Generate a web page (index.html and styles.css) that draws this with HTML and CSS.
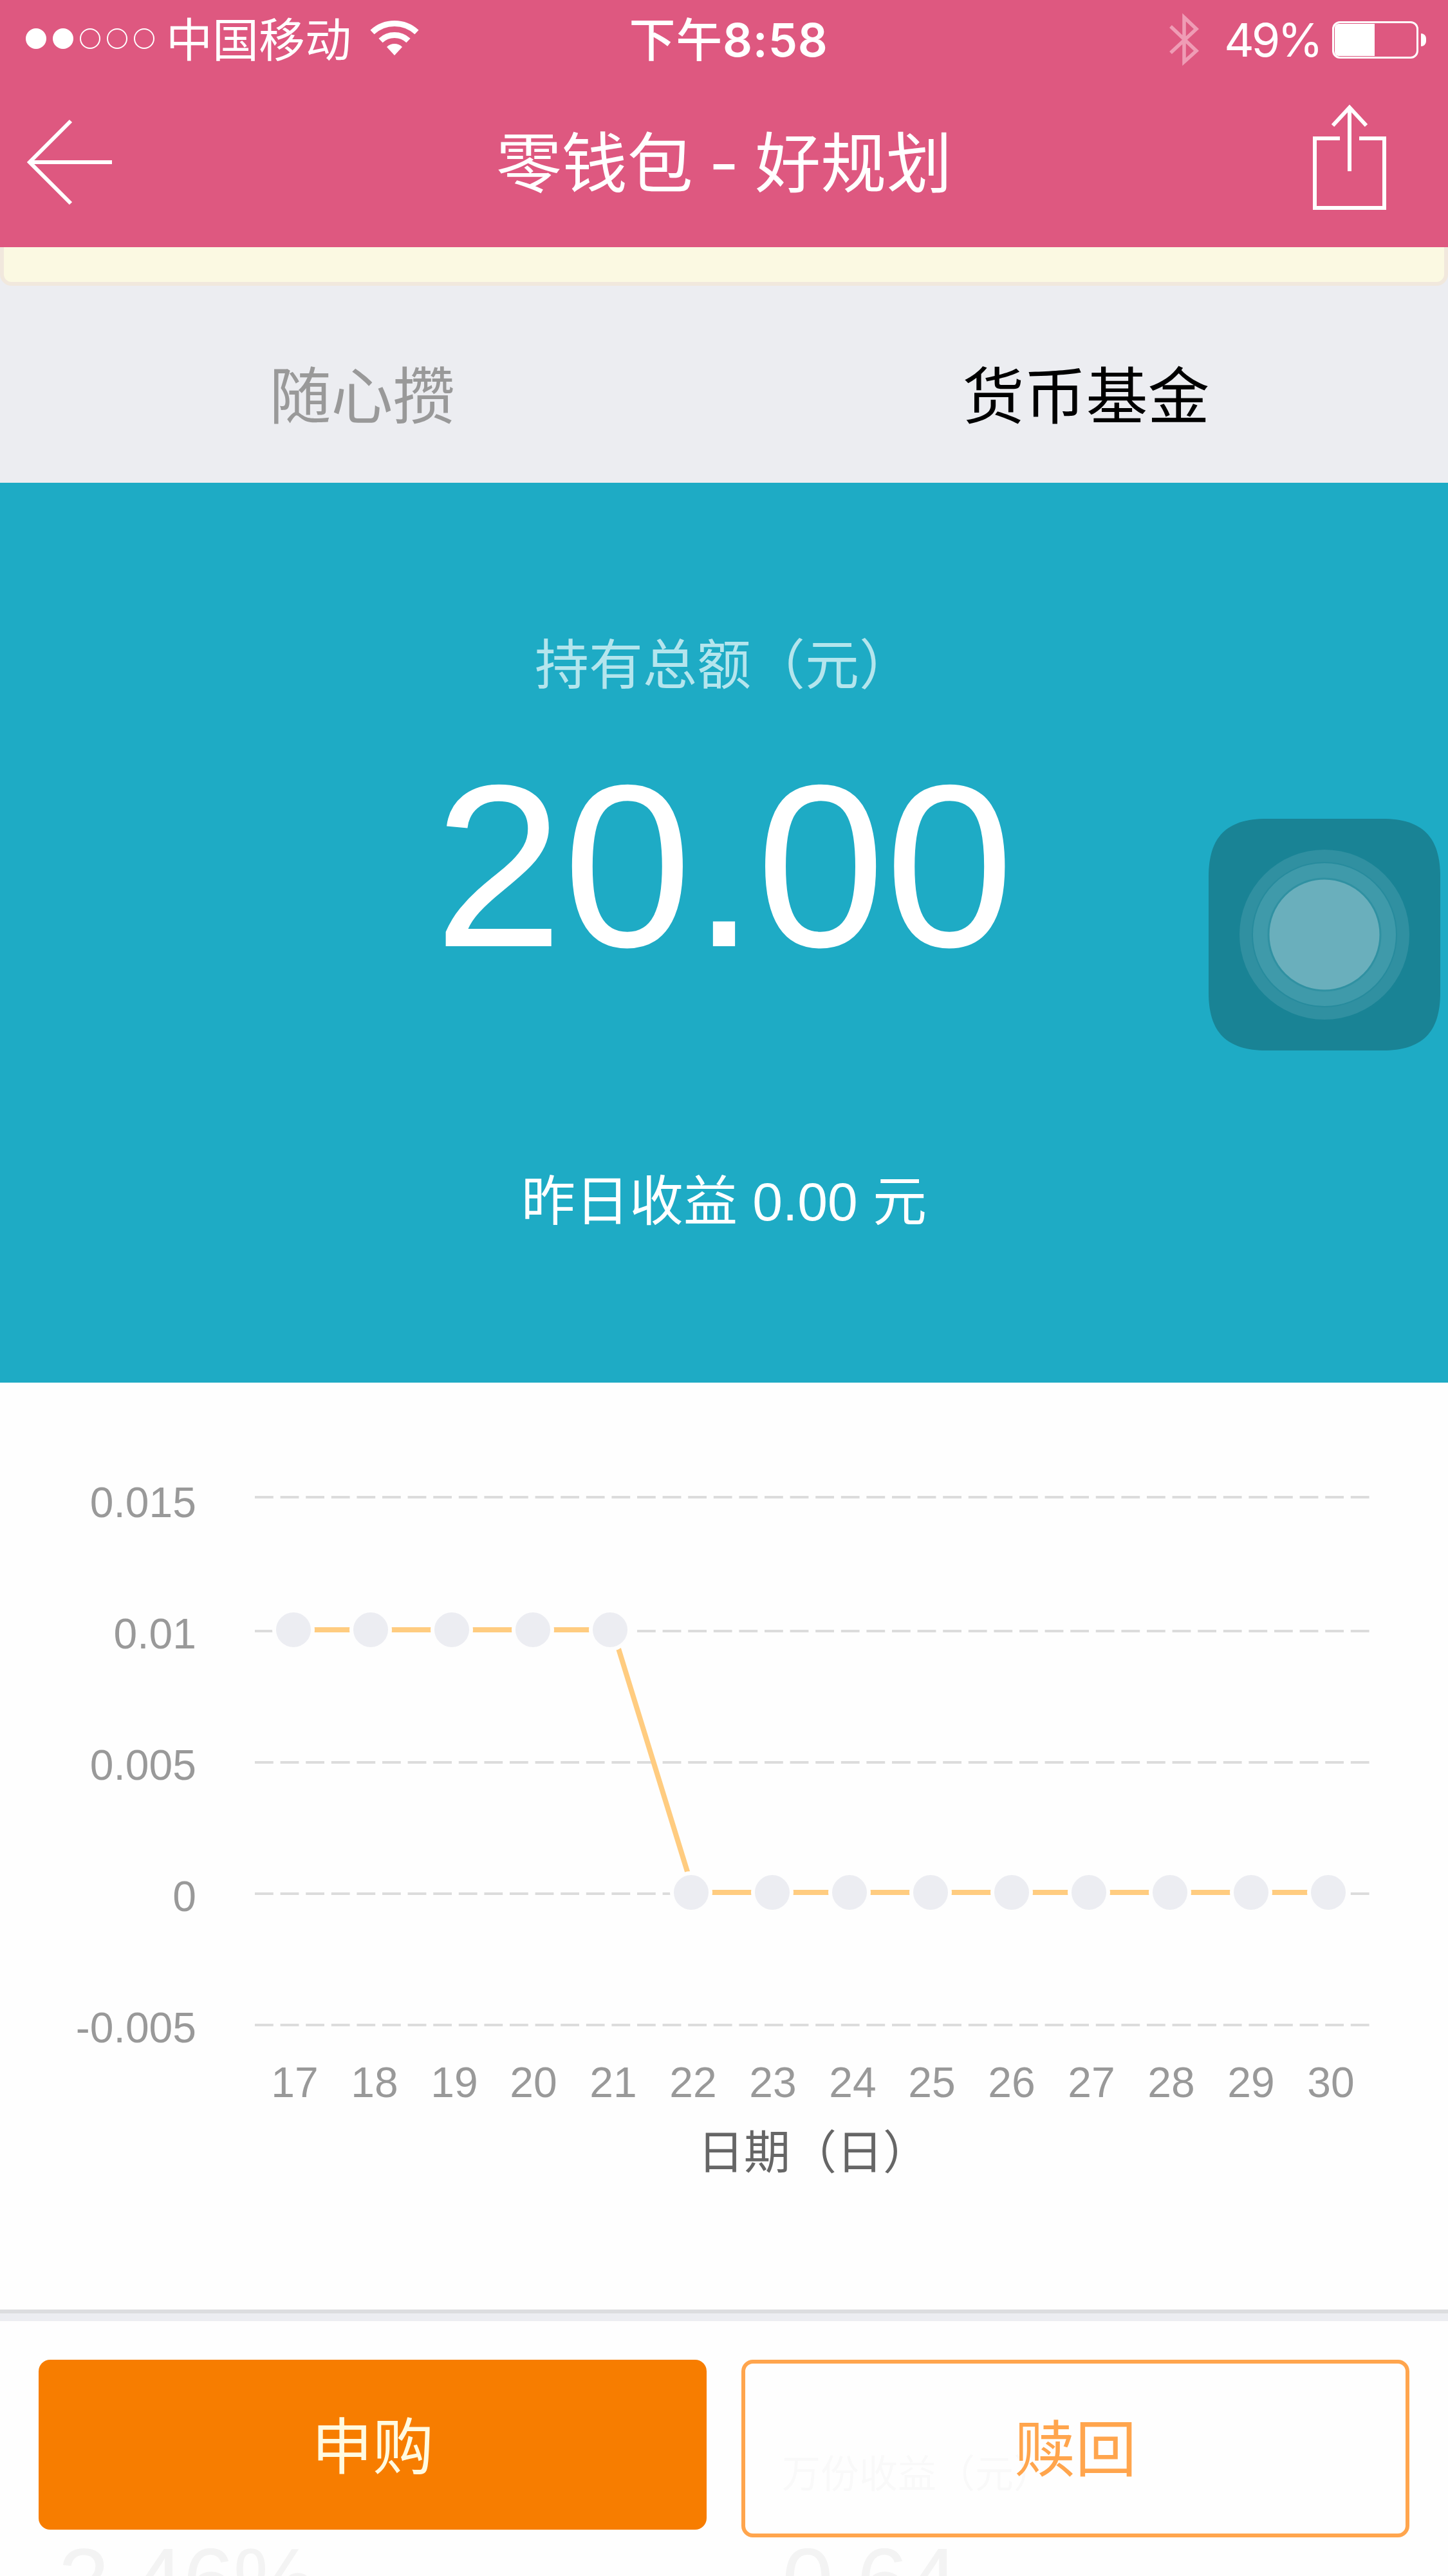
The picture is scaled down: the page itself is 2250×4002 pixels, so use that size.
FILE: index.html
```
<!DOCTYPE html>
<html lang="zh-CN">
<head>
    <meta charset="UTF-8">
    <meta name="viewport" content="width=device-width, initial-scale=1.0">
    <title>零钱包 - 好规划</title>
    <link rel="stylesheet" href="styles.css">
</head>
<body>
    <div class="page">
        <header class="header">
            <div class="status">
                <div class="status-left">
                    <div class="signal">
                        <span class="dot full"></span>
                        <span class="dot full"></span>
                        <span class="dot"></span>
                        <span class="dot"></span>
                        <span class="dot"></span>
                    </div>
                    <span class="carrier">中国移动</span>
                    <svg class="wifi" width="76" height="56" viewBox="0 0 76 56">
                        <path d="M3.500 19A50.800 50.800 0 0 1 72.500 19" fill="none" stroke="#fff" stroke-width="9"/>
                        <path d="M16.500 32A31.400 31.400 0 0 1 59.500 32" fill="none" stroke="#fff" stroke-width="9"/>
                        <path d="M38 55L26 42A17 17 0 0 1 50 42Z" fill="#fff"/>
                    </svg>
                </div>
                <span class="time">下午<b>8:58</b></span>
                <div class="status-right">
                    <svg class="bluetooth" width="48" height="84" viewBox="0 0 48 84">
                        <path d="M3 21L43 59L24 76V7L43 25L3 62" fill="none" stroke="#ef9cb5" stroke-width="5.500"/>
                    </svg>
                    <span class="percent">49%</span>
                    <div class="battery"><div class="level" style="width: 49%"></div></div>
                    <span class="battery-tip"></span>
                </div>
            </div>
            <nav class="nav">
                <svg class="back" width="136" height="136" viewBox="0 0 136 136">
                    <path d="M70 4L6 68L70 132M6 68H134" fill="none" stroke="#fff" stroke-width="6"/>
                </svg>
                <h1 class="title">零钱包 - 好规划</h1>
                <svg class="share" width="120" height="166" viewBox="0 0 120 166">
                    <path d="M44 53H5V161H113V53H74M59 4V104M33 33L59 5L85 33" fill="none" stroke="#fff" stroke-width="6"/>
                </svg>
            </nav>
        </header>

        <div class="notice"></div>

        <div class="tabs">
            <div class="tab">随心攒</div>
            <div class="tab active">货币基金</div>
        </div>

        <section class="summary">
            <p class="summary-label">持有总额（元）</p>
            <p class="summary-amount">20.00</p>
            <p class="summary-income">昨日收益 0.00 元</p>
        </section>

        <section class="chart">
            <svg width="2250" height="1440" viewBox="0 2148 2250 1440">
                <g class="grid">
                    <path d="M396 2326H2128"/>
                    <path d="M396 2534H2128"/>
                    <path d="M396 2738H2128"/>
                    <path d="M396 2942H2128"/>
                    <path d="M396 3146H2128"/>
                </g>
                <path class="line" d="M456 2532H952L1078 2940H2064"/>
                <g class="points">
                    <circle cx="456" cy="2532" r="30"/>
                    <circle cx="576" cy="2532" r="30"/>
                    <circle cx="702" cy="2532" r="30"/>
                    <circle cx="828" cy="2532" r="30"/>
                    <circle cx="948" cy="2532" r="30"/>
                    <circle cx="1074" cy="2940" r="30"/>
                    <circle cx="1200" cy="2940" r="30"/>
                    <circle cx="1320" cy="2940" r="30"/>
                    <circle cx="1446" cy="2940" r="30"/>
                    <circle cx="1572" cy="2940" r="30"/>
                    <circle cx="1692" cy="2940" r="30"/>
                    <circle cx="1818" cy="2940" r="30"/>
                    <circle cx="1944" cy="2940" r="30"/>
                    <circle cx="2064" cy="2940" r="30"/>
                </g>
                <g class="y-labels">
                    <text x="305" y="2357">0.015</text>
                    <text x="305" y="2561">0.01</text>
                    <text x="305" y="2765">0.005</text>
                    <text x="305" y="2969">0</text>
                    <text x="305" y="3173">-0.005</text>
                </g>
                <g class="x-labels">
                    <text x="458" y="3258">17</text>
                    <text x="582" y="3258">18</text>
                    <text x="706" y="3258">19</text>
                    <text x="829" y="3258">20</text>
                    <text x="953" y="3258">21</text>
                    <text x="1077" y="3258">22</text>
                    <text x="1201" y="3258">23</text>
                    <text x="1325" y="3258">24</text>
                    <text x="1448" y="3258">25</text>
                    <text x="1572" y="3258">26</text>
                    <text x="1696" y="3258">27</text>
                    <text x="1820" y="3258">28</text>
                    <text x="1944" y="3258">29</text>
                    <text x="2068" y="3258">30</text>
                </g>
                <text class="axis-title" x="1264" y="3369">日期（日）</text>
            </svg>
        </section>

        <section class="stats">
            <div class="stat">
                <p class="stat-label">七日年化</p>
                <p class="stat-value">2.46%</p>
            </div>
            <div class="stat">
                <p class="stat-label">万份收益（元）</p>
                <p class="stat-value">0.64</p>
            </div>
        </section>

        <footer class="actions">
            <button class="btn buy">申购</button>
            <button class="btn redeem">赎回</button>
        </footer>

        <div class="assistive">
            <svg width="360" height="360" viewBox="0 0 360 360">
                <path d="M90 0H270C332 0 360 28 360 90V270C360 332 332 360 270 360H90C28 360 0 332 0 270V90C0 28 28 0 90 0Z" fill="#198395"/>
                <circle cx="180" cy="180" r="132" fill="#3090a1"/>
                <circle cx="180" cy="180" r="112" fill="#3f9aaa" stroke="#278b9d" stroke-width="2"/>
                <circle cx="180" cy="180" r="87" fill="#6aafbc" stroke="#3091a2" stroke-width="3"/>
            </svg>
        </div>
    </div>
</body>
</html>
```
FILE: styles.css
```
* {
    box-sizing: border-box;
}
body {
    margin: 0;
    font-family: "Liberation Sans", "Noto Sans CJK SC", sans-serif;
    background: #ecedf1;
}
p, h1 {
    margin: 0;
    font-weight: 400;
}
svg {
    display: block;
    flex: none;
}
.page {
    position: relative;
    width: 2250px;
    height: 4002px;
    overflow: hidden;
}

/* header */
.header {
    height: 384px;
    background: #de5880;
    color: #fff;
    font-family: Inter, "Noto Sans CJK SC", sans-serif;
}
.status {
    display: grid;
    grid-template-columns: 1fr auto 1fr;
    align-items: center;
    height: 124px;
    padding: 0 34px 0 40px;
    font-size: 72px;
    line-height: 84px;
}
.status-left, .status-right {
    display: flex;
    align-items: center;
}
.status-right {
    justify-content: flex-end;
}
.signal {
    display: flex;
    gap: 10px;
    margin: -4px 18px 0 0;
}
.dot {
    width: 32px;
    height: 32px;
    border: 2px solid #fff;
    border-radius: 50%;
}
.dot.full {
    background: #fff;
}
.wifi {
    margin: -6px 0 0 29px;
}
.time {
    padding-left: 8px;
    font-weight: 500;
    letter-spacing: 0.8px;
}
.time b {
    font-weight: 600;
}
.bluetooth {
    margin-right: 38px;
}
.percent {
    margin-right: 18px;
    letter-spacing: -4px;
}
.battery {
    width: 134px;
    height: 58px;
    padding: 1px;
    border: 3px solid #fff;
    border-radius: 12px;
}
.level {
    height: 100%;
    background: #fff;
    border-radius: 6px 0 0 6px;
}
.battery-tip {
    width: 8px;
    height: 20px;
    margin-left: 4px;
    background: #fff;
    border-radius: 0 8px 8px 0;
}
.nav {
    display: grid;
    grid-template-columns: 1fr auto 1fr;
    align-items: center;
    height: 260px;
    padding: 0 40px;
}
.back {
    margin-top: -4px;
}
.title {
    font-size: 102px;
    line-height: 120px;
    word-spacing: -4px;
}
.share {
    justify-self: end;
    margin: -18px 52px 0 0;
}

.notice {
    height: 60px;
    background: #fbf9e2;
    border: 6px solid #f1e8dd;
    border-top: 0;
    border-radius: 0 0 18px 18px;
}

/* tabs */
.tabs {
    display: flex;
    height: 306px;
    padding-top: 40px;
    align-items: center;
}
.tab {
    flex: 1;
    text-align: center;
    font-size: 96px;
    line-height: 96px;
    color: #999;
}
.tab.active {
    color: #000;
}

/* total amount */
.summary {
    height: 1398px;
    padding-top: 242px;
    background: #1eabc5;
    color: #fff;
    text-align: center;
}
.summary-label {
    font-size: 84px;
    line-height: 84px;
    color: #b4e5ed;
}
.summary-amount {
    margin-top: 89px;
    font-size: 360px;
    line-height: 360px;
}
.summary-income {
    margin-top: 300px;
    font-size: 84px;
    line-height: 84px;
}

/* chart */
.chart {
    height: 1446px;
    background: #fefefe;
    border-bottom: 6px solid #dcdddf;
}
.grid path {
    stroke: #dcdcdc;
    stroke-width: 4;
    stroke-dasharray: 28.8 10.8;
}
.line {
    fill: none;
    stroke: #ffcc80;
    stroke-width: 8;
}
.points circle {
    fill: #ecedf2;
    stroke: #fefefe;
    stroke-width: 6;
}
.y-labels text, .x-labels text {
    font-size: 66px;
    fill: #999;
}
.y-labels text {
    text-anchor: end;
}
.x-labels text, .axis-title {
    text-anchor: middle;
}
.axis-title {
    font-size: 72px;
    fill: #666;
}

/* stats under the bottom bar */
.stats {
    display: flex;
    height: 396px;
    margin-top: 12px;
    padding-top: 206px;
    background: #fff;
}
.stat {
    flex: 1;
    padding-left: 90px;
}
.stat-label {
    font-size: 60px;
    line-height: 66px;
    color: #999;
}
.stat-value {
    margin-top: 61px;
    font-size: 144px;
    line-height: 144px;
    letter-spacing: -2px;
    color: #333;
}

/* bottom bar */
.actions {
    position: absolute;
    left: 0;
    right: 0;
    bottom: 0;
    display: flex;
    align-items: flex-start;
    gap: 54px;
    height: 396px;
    padding: 60px 60px 0;
    background: rgba(254, 254, 254, 0.95);
}
.btn {
    flex: none;
    width: 1038px;
    height: 264px;
    padding: 0;
    border: 0;
    border-radius: 18px;
    font-family: inherit;
    font-size: 95px;
    line-height: 96px;
}
.buy {
    padding-top: 10px;
    background: #f77d00;
    color: #fffae0;
}
.redeem {
    height: 276px;
    padding-top: 6px;
    background: transparent;
    border: 6px solid #ffa54d;
    color: #ffa54d;
}

/* floating touch button */
.assistive {
    position: absolute;
    left: 1878px;
    top: 1272px;
}
```
